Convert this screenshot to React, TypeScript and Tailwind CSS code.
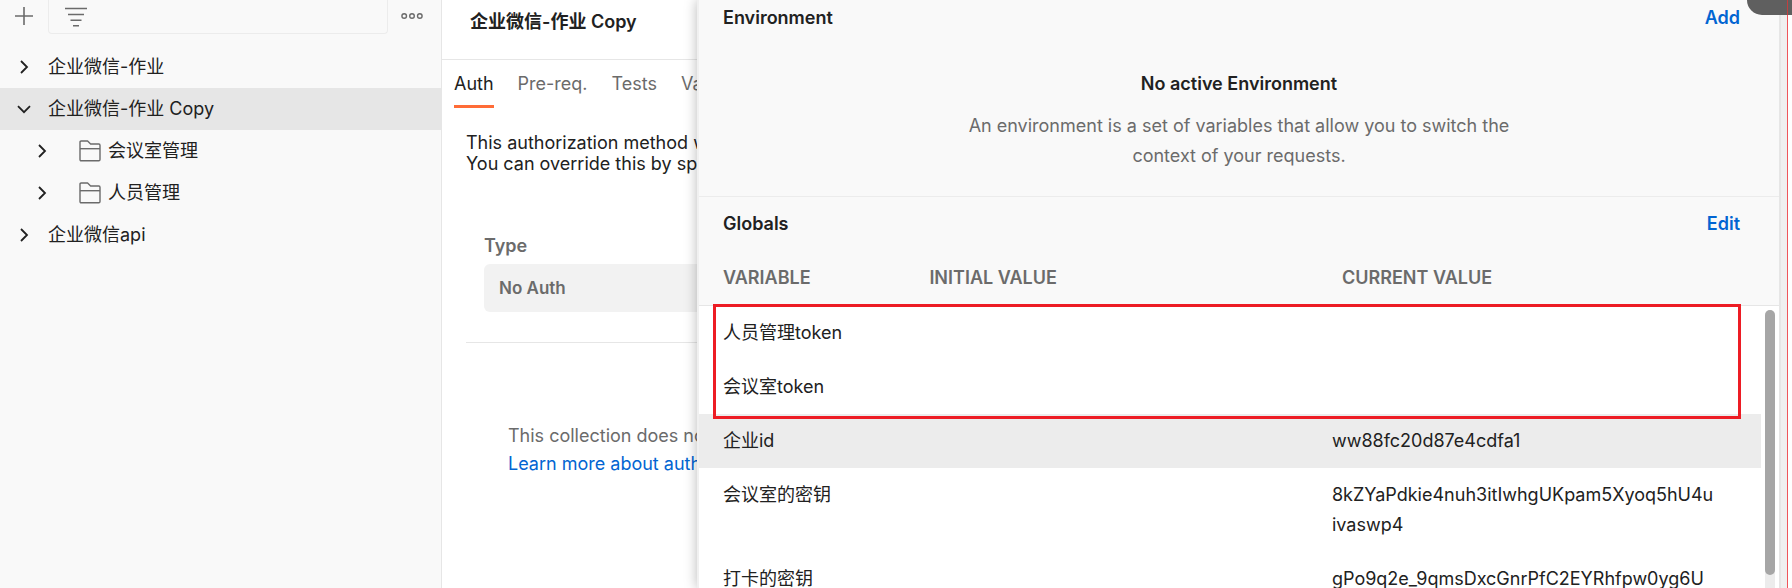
import React from "react";

type Variable = { name: string; initial: string; current: string; active?: boolean };

const variables: Variable[] = [
  { name: "人员管理token", initial: "", current: "" },
  { name: "会议室token", initial: "", current: "" },
  { name: "企业id", initial: "", current: "ww88fc20d87e4cdfa1", active: true },
  { name: "会议室的密钥", initial: "", current: "8kZYaPdkie4nuh3itIwhgUKpam5Xyoq5hU4uivaswp4" },
  { name: "打卡的密钥", initial: "", current: "gPo9q2e_9qmsDxcGnrPfC2EYRhfpw0yg6U" },
];

function Chevron({ open = false }: { open?: boolean }) {
  return (
    <svg
      width="18"
      height="18"
      viewBox="0 0 18 18"
      fill="none"
      stroke="#212121"
      strokeWidth="1.8"
      className="shrink-0"
      aria-hidden="true"
    >
      <path d={open ? "M3 6.2 9 12.2 15 6.2" : "M6 3 12 9 6 15"} />
    </svg>
  );
}

function FolderIcon() {
  return (
    <svg
      width="22"
      height="22"
      viewBox="0 0 22 22"
      fill="none"
      stroke="#6b6b6b"
      strokeWidth="1.4"
      strokeLinejoin="round"
      className="shrink-0"
      aria-hidden="true"
    >
      <path d="M1 19.5V2.2Q1 1 2.2 1H8.6L11.6 4H19.8Q21 4 21 5.2V19.5Q21 20.7 19.8 20.7H2.2Q1 20.7 1 19.5Z" />
      <path d="M1 8.7H21" />
    </svg>
  );
}

function CollectionRow({ name, open = false }: { name: string; open?: boolean }) {
  return (
    <li>
      <button
        className={
          open
            ? "flex h-[42px] w-full items-center gap-[15px] bg-[#e6e6e6] pl-[15px] text-left"
            : "flex h-[42px] w-full items-center gap-[15px] pl-[15px] text-left"
        }
      >
        <Chevron open={open} />
        <span>{name}</span>
      </button>
    </li>
  );
}

function FolderRow({ name }: { name: string }) {
  return (
    <li>
      <button className="flex h-[42px] w-full items-center pl-[33px] text-left">
        <Chevron />
        <span className="ml-7 flex items-center gap-[7px]">
          <FolderIcon />
          <span>{name}</span>
        </span>
      </button>
    </li>
  );
}

function Sidebar() {
  return (
    <aside className="w-[442px] shrink-0 border-r border-[#e6e6e6] bg-[#f9f9f9]">
      <div className="flex h-[34px] items-stretch pl-[15px]">
        <button aria-label="New collection" className="flex w-[33px] items-center pb-0.5">
          <svg width="18" height="18" viewBox="0 0 18 18" stroke="#6b6b6b" strokeWidth="1.6">
            <path d="M9 0V18M0 9H18" />
          </svg>
        </button>
        <label className="flex min-w-0 flex-1 items-center gap-3 rounded-b-[4px] border-x border-b border-[#ececec] pl-4">
          <svg width="22" height="20" viewBox="0 0 22 20" stroke="#6b6b6b" strokeWidth="1.5" className="shrink-0">
            <path d="M0 1.5H22M3 7.5H19M5.5 13.2H16.5M8 18.8H14" />
          </svg>
          <input type="text" aria-label="Filter collections" className="min-w-0 flex-1 bg-transparent outline-none" />
        </label>
        <button aria-label="More actions" className="flex w-[53px] items-center pb-0.5 pl-[13px]">
          <svg width="22" height="8" viewBox="0 0 22 8" fill="none" stroke="#6b6b6b" strokeWidth="1.4">
            <circle cx="3.2" cy="4" r="2.3" />
            <circle cx="11" cy="4" r="2.3" />
            <circle cx="18.8" cy="4" r="2.3" />
          </svg>
        </button>
      </div>
      <ul className="mt-3">
        <CollectionRow name="企业微信-作业" />
        <CollectionRow name="企业微信-作业 Copy" open />
        <FolderRow name="会议室管理" />
        <FolderRow name="人员管理" />
        <CollectionRow name="企业微信api" />
      </ul>
    </aside>
  );
}

function CollectionEditor() {
  return (
    <main className="w-[255px] shrink-0 overflow-hidden whitespace-nowrap bg-white">
      <h1 className="flex h-[60px] items-center border-b border-[#e6e6e6] pb-[15px] pl-7 font-semibold">
        企业微信-作业 Copy
      </h1>
      <nav className="flex gap-6 pl-3 text-[#6b6b6b]">
        <button className="h-12 border-b-3 border-[#ff6c37] pt-0.5 text-[#212121]">Auth</button>
        <button className="h-12 border-b-3 border-transparent pt-0.5">Pre-req.</button>
        <button className="h-12 border-b-3 border-transparent pt-0.5">Tests</button>
        <button className="h-12 border-b-3 border-transparent pt-0.5">Variables</button>
      </nav>
      <div className="pl-6">
        <p className="pt-6 leading-[21px]">
          This authorization method will be used
          <br />
          You can override this by specifying one
        </p>
        <div className="border-b border-[#e6e6e6] pb-[30px] pl-[18px] pt-[59px]">
          <label htmlFor="auth-type" className="block h-[31px] font-semibold leading-[26px] text-[#6b6b6b]">
            Type
          </label>
          <select
            id="auth-type"
            className="block h-12 w-80 appearance-none rounded-md bg-[#f2f2f2] pl-[15px] text-[17px] font-semibold text-[#6b6b6b]"
          >
            <option>No Auth</option>
          </select>
        </div>
        <p className="pl-[42px] pt-[79px] leading-7 text-[#6b6b6b]">
          This collection does not use
          <br />
          <a href="#authorization" className="text-[#0265d2]">
            Learn more about authorization
          </a>
        </p>
      </div>
    </main>
  );
}

function Globals() {
  return (
    <section>
      <header className="flex h-[54px] items-center justify-between pl-6 pr-[39px] font-semibold">
        <h2>Globals</h2>
        <button className="text-[#0265d2]">Edit</button>
      </header>
      <div className="relative flex">
        <table className="min-w-0 flex-1 table-fixed border-separate border-spacing-0 bg-white text-left">
          <colgroup>
            <col className="w-[20%]" />
            <col className="w-[38%]" />
            <col className="w-[42%]" />
          </colgroup>
          <thead className="bg-[#f9f9f9] text-[#6b6b6b]">
            <tr className="h-[55px]">
              <th className="border-b border-[#e6e6e6] pl-6 font-semibold">VARIABLE</th>
              <th className="border-b border-[#e6e6e6] pl-[18px] font-semibold">INITIAL VALUE</th>
              <th className="border-b border-[#e6e6e6] pl-[27px] font-semibold">CURRENT VALUE</th>
            </tr>
          </thead>
          <tbody className="leading-[30px]">
            {variables.map((v) => (
              <tr key={v.name} className={v.active ? "bg-[#ececec]" : "bg-white"}>
                <td className="h-[54px] py-3 pl-6 align-top">{v.name}</td>
                <td className="py-3 pl-[18px] align-top">{v.initial}</td>
                <td className="break-all py-3 pl-[17px] pr-11 align-top">{v.current}</td>
              </tr>
            ))}
          </tbody>
        </table>
        <div className="flex w-[18px] shrink-0 flex-col bg-white">
          <div className="h-[55px] border-b border-[#e6e6e6] bg-[#f9f9f9]" />
          <div className="ml-1 mt-1 w-2.5 flex-1 rounded-full bg-[#ececec]">
            <div className="h-[265px] rounded-full bg-[#a6a6a6]" />
          </div>
        </div>
        <div className="pointer-events-none absolute left-3.5 right-[38px] top-[53px] h-[115px] border-3 border-[#ed1c24]" />
      </div>
    </section>
  );
}

function VariablesPanel() {
  return (
    <aside className="z-10 min-w-0 flex-1 overflow-hidden border-l-2 border-[#f0f0f0] bg-[#f9f9f9] shadow-[0_0_12px_rgba(0,0,0,0.28)]">
      <section className="h-[197px] border-b border-[#ececec]">
        <header className="flex h-9 items-center justify-between pl-6 pr-[39px] font-semibold">
          <h2>Environment</h2>
          <button className="text-[#0265d2]">Add</button>
        </header>
        <div className="mx-auto max-w-[560px] pt-[33px] text-center leading-[30px]">
          <h3 className="font-semibold">No active Environment</h3>
          <p className="mt-3 text-[#6b6b6b]">
            An environment is a set of variables that allow you to switch the context of your requests.
          </p>
        </div>
      </section>
      <Globals />
    </aside>
  );
}

export default function App() {
  return (
    <div className="relative flex h-screen overflow-hidden bg-white font-['Inter','Noto_Sans_CJK_SC',sans-serif] text-lg text-[#212121]">
      <Sidebar />
      <CollectionEditor />
      <VariablesPanel />
      <div className="z-10 flex w-[13px] shrink-0 bg-white">
        <div className="w-2 border-l-2 border-[#e6e6e6] bg-[#f0f0f0]" />
        <div className="w-px bg-[#f0555a]" />
      </div>
      <div className="absolute right-0 top-0 z-20 flex h-[15px] w-[45px] justify-end rounded-bl-[20px] bg-[#5f5f5f] pr-1">
        <div className="w-px bg-[#c04040]" />
      </div>
    </div>
  );
}
